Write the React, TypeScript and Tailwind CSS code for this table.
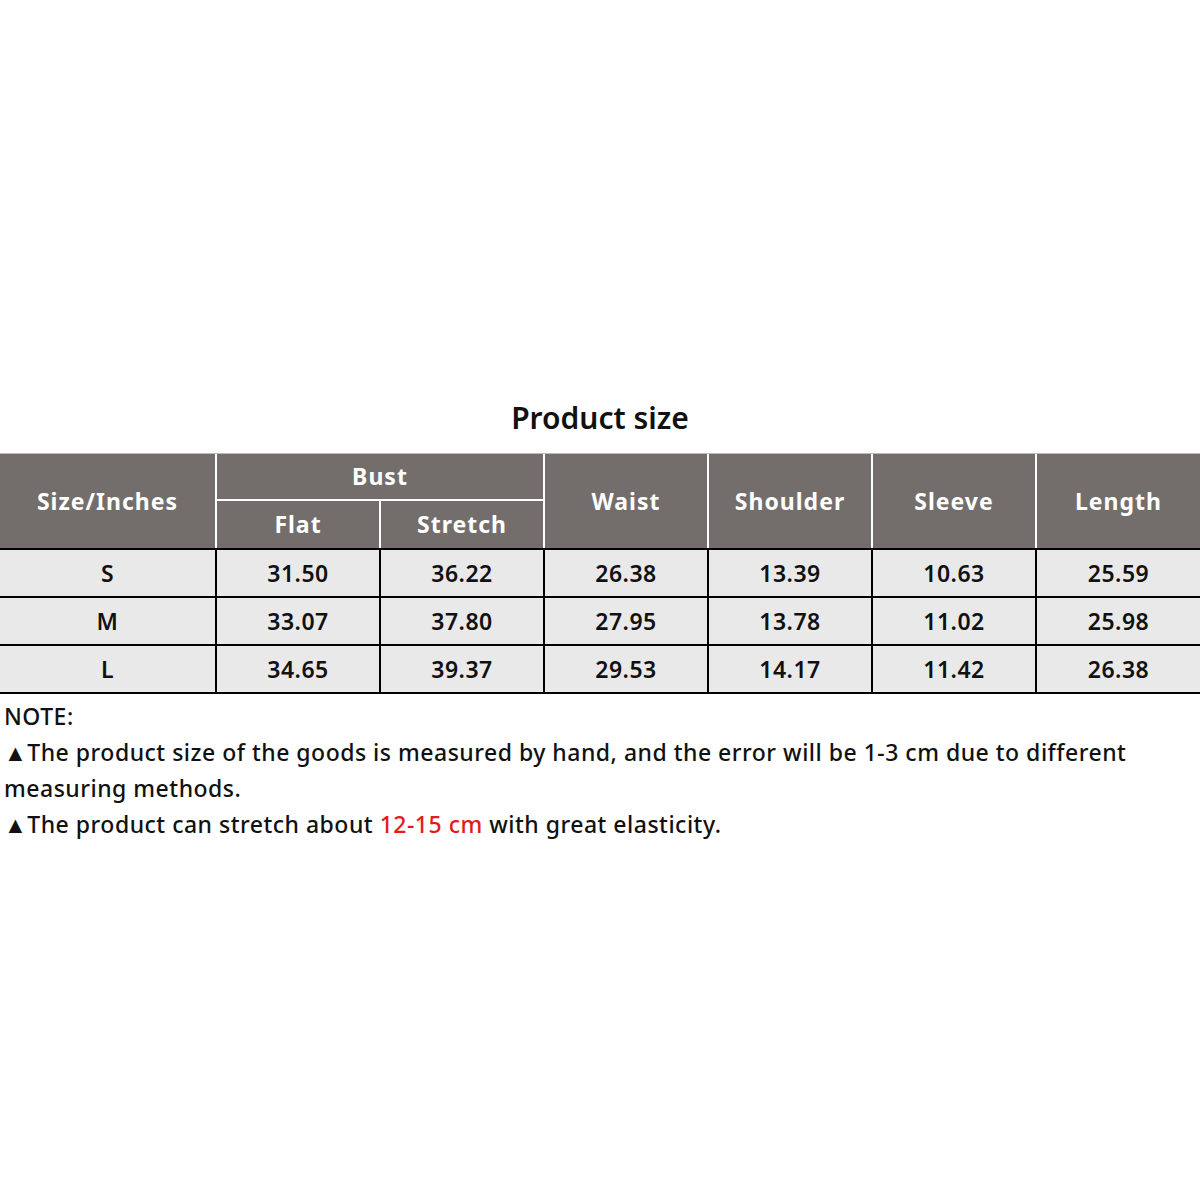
const rows = [
  ['S', '31.50', '36.22', '26.38', '13.39', '10.63', '25.59'],
  ['M', '33.07', '37.80', '27.95', '13.78', '11.02', '25.98'],
  ['L', '34.65', '39.37', '29.53', '14.17', '11.42', '26.38'],
];

const cols = 'grid grid-cols-[217px_164px_164px_164px_164px_164px_163px]';

export default function App() {
  return (
    <div className="w-[1200px] h-[1200px] bg-white font-['Noto_Sans','Open_Sans',sans-serif] text-[#111]">
      <div className="pt-[398px]">
        <h1 className="text-center text-[30px] leading-[40px] font-semibold text-[#111]">Product size</h1>

        <div className="mt-[15px] border-t border-[#bbb]">
          {/* header */}
          <div className={`${cols} grid-rows-[47px_47px] bg-[#736e6c] text-white font-bold text-[23px] tracking-[1px]`}>
            <div className="row-span-2 flex items-center justify-center border-r-2 border-white">Size/Inches</div>
            <div className="col-span-2 flex items-center justify-center border-r-2 border-b-2 border-white">Bust</div>
            <div className="row-span-2 flex items-center justify-center border-r-2 border-white">Waist</div>
            <div className="row-span-2 flex items-center justify-center border-r-2 border-white">Shoulder</div>
            <div className="row-span-2 flex items-center justify-center border-r-2 border-white">Sleeve</div>
            <div className="row-span-2 flex items-center justify-center">Length</div>
            <div className="flex items-center justify-center border-r-2 border-white">Flat</div>
            <div className="flex items-center justify-center border-r-2 border-white">Stretch</div>
          </div>

          {/* data */}
          <div className="border-t-2 border-black">
            {rows.map((r) => (
              <div key={r[0]} className={`${cols} h-[48px] bg-[#e9e9e9] border-b-2 border-black text-[23px] tracking-[0.5px] font-semibold`}>
                {r.map((v, i) => (
                  <div
                    key={i}
                    className={`flex items-center justify-center ${i < 6 ? 'border-r-2 border-black' : ''}`}
                  >
                    {v}
                  </div>
                ))}
              </div>
            ))}
          </div>
        </div>

        <div className="px-[4px] pt-[4px] text-[23px] leading-[36px] tracking-[0.5px] font-medium text-[#111]">
          <p>NOTE:</p>
          <p>
            ▲The product size of the goods is measured by hand, and the error will be 1-3 cm due to different measuring
            methods.
          </p>
          <p>
            ▲The product can stretch about <span className="text-[#e31b1b]">12-15 cm</span> with great elasticity.
          </p>
        </div>
      </div>
    </div>
  );
}
